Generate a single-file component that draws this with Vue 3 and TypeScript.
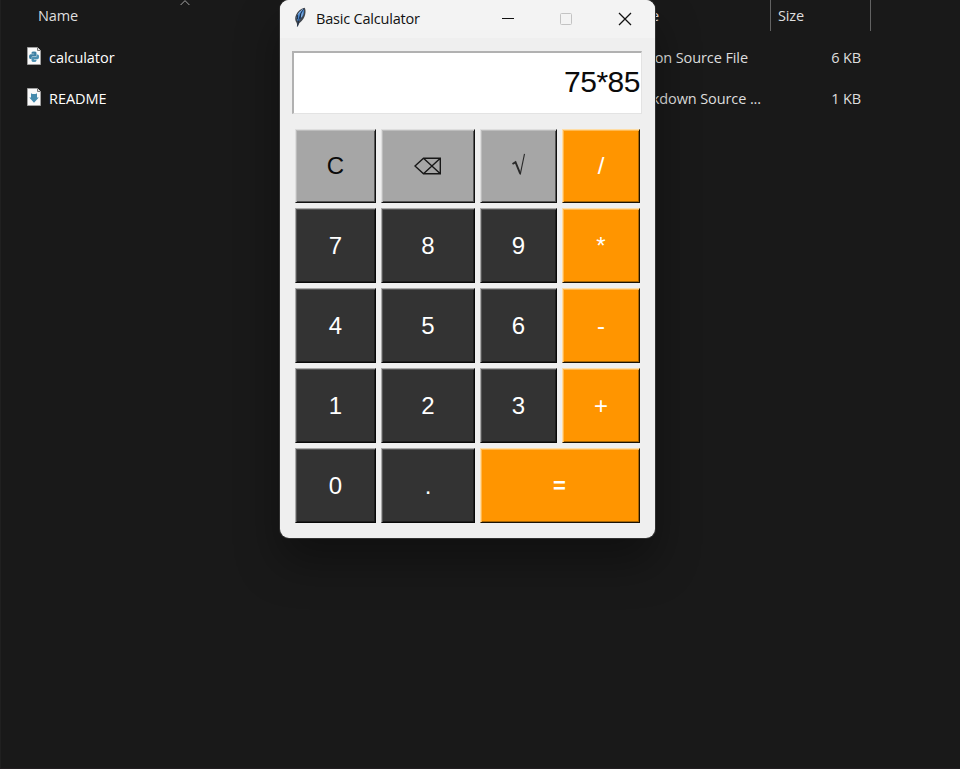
<script setup lang="ts">
interface FileRow {
  name: string
  kind: 'python' | 'markdown'
  type: string
  size: string
}
interface Key {
  label: string
  tone: 'gray' | 'dark' | 'orange'
  wide?: boolean
  icon?: 'erase' | 'root'
}

const files: FileRow[] = [
  { name: 'calculator', kind: 'python', type: 'Python Source File', size: '6 KB' },
  { name: 'README', kind: 'markdown', type: 'Markdown Source ...', size: '1 KB' },
]
const expression = '75*85'
const dark = (label: string): Key => ({ label, tone: 'dark' })
const orange = (label: string): Key => ({ label, tone: 'orange' })
const keys: Key[] = [
  { label: 'C', tone: 'gray' },
  { label: '⌫', tone: 'gray', icon: 'erase' },
  { label: '√', tone: 'gray', icon: 'root' },
  orange('/'),
  dark('7'), dark('8'), dark('9'), orange('*'),
  dark('4'), dark('5'), dark('6'), orange('-'),
  dark('1'), dark('2'), dark('3'), orange('+'),
  dark('0'), dark('.'),
  { label: '=', tone: 'orange', wide: true },
]
</script>

<template>
  <main class="desktop">
    <section class="explorer">
      <div class="row header">
        <span class="cell name-head">Name
          <svg class="sort" width="10" height="6" viewBox="0 0 10 6"><path d="M.6 5 5 .6 9.400 5" fill="none" stroke="#a6a6a6" /></svg>
        </span>
        <span class="cell type">Type</span>
        <span class="cell size-head">Size</span>
      </div>
      <div v-for="file in files" :key="file.name" class="row">
        <span class="cell file">
          <svg class="file-icon" width="14" height="18" viewBox="0 0 14 18">
            <path d="M.5.5h10l3 3v14H.5z" fill="#fafafa" stroke="#a0a0a0" />
            <path d="M10.500.5v3h3" fill="#ddd" stroke="#777" />
            <g v-if="file.kind === 'python'">
              <path d="M4.500 5.800Q4.500 4.600 7 4.600t2.500 1.200v2.500q0 1.200-1.300 1.200H5.600q-1 0-1 1.400v1H3.500Q2 11.900 2 9.700t1.500-2.400h3.700v-.5H4.500z" fill="#3c7fa3" />
              <path d="M9.500 13.600q0 1.500-2.500 1.500t-2.500-1.500v-2.300q0-1.200 1.300-1.200h2.600q1.200 0 1.200-1.500V7.500h1q1.500 0 1.500 2.300t-1.500 2.500H6.900v.5h2.600z" fill="#4d90b2" />
            </g>
            <path v-else d="M4 5.200 5.500 6h3L10 5.200v4.300h1.800L7 14.800 2.300 9.500H4z" fill="#458bad" />
          </svg>
          <span>{{ file.name }}</span>
        </span>
        <span class="cell type kind">{{ file.type }}</span>
        <span class="cell size">{{ file.size }}</span>
      </div>
    </section>

    <section class="window">
      <header class="titlebar">
        <svg class="feather" width="14" height="21" viewBox="0 0 14 21">
          <path d="M11.600.7q1.600 2.300.5 7.100-1.200 5-5.800 8.500L4.600 19.700 3.700 16Q.9 12.500 3.200 7.500 5.500 2.500 11.600.7z" fill="#41464d" />
          <path d="M10.800 2q.7 3-.5 6.100L6.100 14 4.300 13.700 3.600 10.500 6 5.300z" fill="#4b87cb" />
          <path d="M10.800 1.500Q7 6 4.400 19.500M7.700 6.500l-.5 5.500M4.500 8.200v4" fill="none" stroke="#172a45" stroke-width=".9" />
          <path d="m5 7.500 3-3.800 2-1.300M9.400 5.500 8.500 10" fill="none" stroke="#9bc2ef" stroke-width=".8" />
        </svg>
        <h1>Basic Calculator</h1>
        <svg class="controls" width="132" height="14" viewBox="0 0 132 14">
          <path d="M1 6.500h12" stroke="#111" />
          <rect x="59.500" y="1.500" width="11" height="11" rx="1" fill="none" stroke="#c3c3c3" />
          <path d="m118 1 12 12M130 1l-12 12" stroke="#111" stroke-width="1.250" />
        </svg>
      </header>
      <div class="entry">{{ expression }}</div>
      <div class="keypad">
        <button v-for="key in keys" :key="key.label" :class="[key.tone, { wide: key.wide }]" :aria-label="key.label">
          <svg v-if="key.icon === 'erase'" class="erase" width="28" height="18" viewBox="0 0 28 18">
            <path d="M1 9 9.500 1.200h16.800v15.600H9.500zM9.500 1.200l16.800 15.600M26.300 1.200 9.500 16.800" fill="none" stroke="#171717" stroke-width="1.400" />
          </svg>
          <svg v-else-if="key.icon === 'root'" class="root" width="15" height="24" viewBox="0 0 15 24">
            <path d="m1.500 11 3-1.800 4.700 11.500" fill="none" stroke="#292929" stroke-width="1.900" />
            <path d="M9.200 21.700 13.500.8" fill="none" stroke="#292929" stroke-width="1.100" />
          </svg>
          <span v-else>{{ key.label }}</span>
        </button>
      </div>
    </section>
  </main>
</template>

<style>
body { margin: 0; background: #191919; }
</style>

<style scoped>
.desktop {
  position: relative;
  box-sizing: border-box;
  width: 960px;
  height: 769px;
  overflow: hidden;
  background: #191919;
  border-left: 1px solid #202020;
  border-bottom: 1px solid #211d20;
  font-family: "Open Sans", "Noto Sans", sans-serif;
  font-size: 14.500px;
  letter-spacing: -.15px;
  color: #dedede;
}
.row {
  display: grid;
  grid-template-columns: 630px 140px 100px;
  height: 41px;
  align-items: center;
}
.row.header { height: 31px; margin-bottom: 6px; }
.cell { white-space: nowrap; }
.header .cell { height: 31px; line-height: 31px; box-sizing: border-box; }
.name-head { position: relative; padding-left: 37px; }
.sort { position: absolute; left: 179px; top: 0; }
.header .type, .size-head { border-right: 1px solid #626262; }
.header .type { text-indent: -3px; letter-spacing: -.4px; }
.size-head { padding-left: 7px; }
.kind { margin-left: -6px; letter-spacing: -.1px; }
.file { display: flex; align-items: center; gap: 8px; padding-left: 26px; color: #fff; letter-spacing: -.05px; }
.file-icon { margin-top: -3px; }
.size { text-align: right; padding-right: 10px; }
.window {
  position: absolute;
  left: 279px;
  top: 0;
  width: 375px;
  height: 538px;
  box-sizing: border-box;
  overflow: visible;
  border-radius: 9px;
  background: #efefef;
  box-shadow: 0 0 0 1px #303030, 0 24px 44px rgba(0, 0, 0, .36);
}
.titlebar {
  display: flex;
  align-items: center;
  height: 38px;
  padding: 0 22px 0 13px;
  background: #f3f3f3;
  border-radius: 9px 9px 0 0;
}
.feather { margin-top: -3px; }
h1 { margin: -2px auto 0 9px; font-size: 14.500px; font-weight: 400; letter-spacing: -.2px; color: #111; }
.entry {
  box-sizing: border-box;
  height: 63px;
  margin: 13px 13px 15px 12px;
  padding-right: 1px;
  border: 1px solid #e3e3e3;
  border-top: 2px solid #b1b1b1;
  border-left: 2px solid #b1b1b1;
  background: #fff;
  color: #0b0b0b;
  font: 30px/58px "Liberation Sans", Arial, sans-serif;
  letter-spacing: -.5px;
  text-align: right;
}
.keypad {
  display: grid;
  grid-template-columns: 81px 94px 77px 78px;
  grid-template-rows: 74px repeat(4, 75px);
  gap: 5px;
  padding-left: 15px;
}
button {
  appearance: none;
  display: flex;
  align-items: center;
  justify-content: center;
  padding: 0;
  border: 1px solid;
  border-radius: 0;
  font: 24px/28px "Liberation Sans", Arial, sans-serif;
  color: #fff;
}
.gray {
  background: #a6a6a6;
  color: #0b0b0b;
  border-color: #dedede #111 #111 #dedede;
  box-shadow: inset 1px 1px #bcbcbc, inset -1px -1px #555;
}
.dark {
  background: #333;
  border-color: #aaa #080808 #080808 #aaa;
  box-shadow: inset 1px 1px #555, inset -1px -1px #1d1d1d;
}
.orange {
  background: #ff9500;
  border-color: #ffdda5 #1b1204 #1b1204 #ffdda5;
  box-shadow: inset 1px 1px #ffb84f, inset -1px -1px #a96500;
}
.wide { grid-column: span 2; font-weight: 700; padding-right: 1px; }
.wide span { font-size: 22px; }
.erase { margin-right: 1px; }
.root { transform: translateY(-1px); }
</style>
